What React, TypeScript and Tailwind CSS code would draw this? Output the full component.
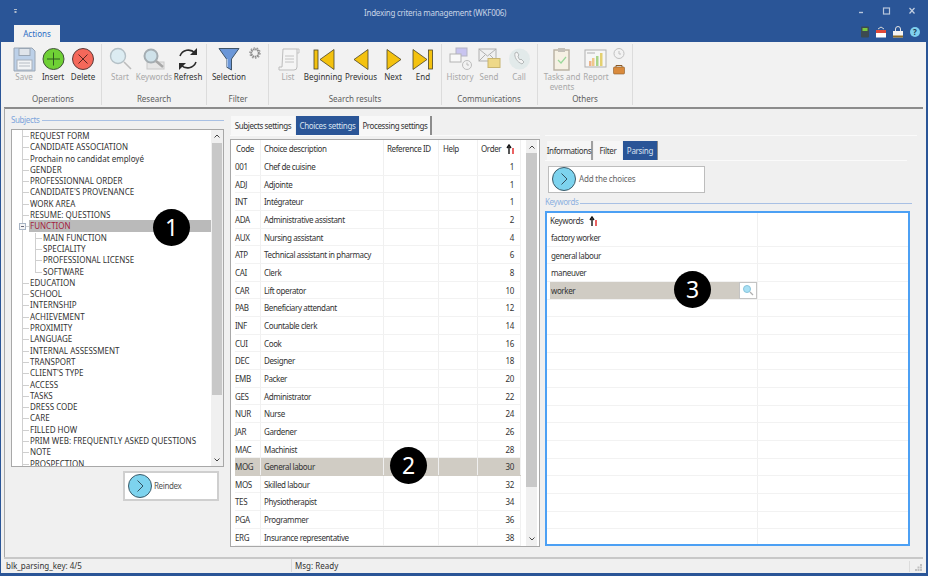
import React from "react";

const subjects: [string, number?][] = [
  ["REQUEST FORM"], ["CANDIDATE ASSOCIATION"], ["Prochain no candidat employé"], ["GENDER"],
  ["PROFESSIONNAL ORDER"], ["CANDIDATE'S PROVENANCE"], ["WORK AREA"], ["RESUME: QUESTIONS"],
  ["FUNCTION"], ["MAIN FUNCTION", 1], ["SPECIALITY", 1], ["PROFESSIONAL LICENSE", 1], ["SOFTWARE", 1],
  ["EDUCATION"], ["SCHOOL"], ["INTERNSHIP"], ["ACHIEVEMENT"], ["PROXIMITY"], ["LANGUAGE"],
  ["INTERNAL ASSESSMENT"], ["TRANSPORT"], ["CLIENT'S TYPE"], ["ACCESS"], ["TASKS"], ["DRESS CODE"],
  ["CARE"], ["FILLED HOW"], ["PRIM WEB: FREQUENTLY ASKED QUESTIONS"], ["NOTE"], ["PROSPECTION"],
];

const choices: [string, string, number][] = [
  ["001", "Chef de cuisine", 1], ["ADJ", "Adjointe", 1], ["INT", "Intégrateur", 1],
  ["ADA", "Administrative assistant", 2], ["AUX", "Nursing assistant", 4],
  ["ATP", "Technical assistant in pharmacy", 6], ["CAI", "Clerk", 8], ["CAR", "Lift operator", 10],
  ["PAB", "Beneficiary attendant", 12], ["INF", "Countable clerk", 14], ["CUI", "Cook", 16],
  ["DEC", "Designer", 18], ["EMB", "Packer", 20], ["GES", "Administrator", 22], ["NUR", "Nurse", 24],
  ["JAR", "Gardener", 26], ["MAC", "Machinist", 28], ["MOG", "General labour", 30],
  ["MOS", "Skilled labour", 32], ["TES", "Physiotherapist", 34], ["PGA", "Programmer", 36],
  ["ERG", "Insurance representative", 38],
];

const keywords = ["factory worker", "general labour", "maneuver", "worker", "", "", "", "", "", "", "", "", "", "", "", "", "", "", ""];

const SortIcon = () => (
  <svg width="9" height="10" viewBox="0 0 9 10" className="shrink-0">
    <path d="M3 10V3M1 4l2-3 2 3" fill="none" stroke="#111" strokeWidth="1.4" />
    <path d="M7 4v6" stroke="#e02020" strokeWidth="1.4" />
  </svg>
);

const Arrow = ({ className }: { className: string }) => (
  <div className={`absolute flex h-[24px] w-[24px] items-center justify-center rounded-full border border-[#3c5a68] bg-[#7dd3ee] ${className}`}>
    <svg width="10" height="14" viewBox="0 0 10 14"><path d="M2.5 1.5 8 7l-5.5 5.5" fill="none" stroke="#33505e" strokeWidth="1" /></svg>
  </div>
);

const Badge = ({ n, className }: { n: number; className: string }) => (
  <div className={`absolute flex h-[37px] w-[37px] items-center justify-center rounded-full bg-black text-[23px] text-white ${className}`}>{n}</div>
);

const RibbonLabel = ({ x, text, off }: { x: number; text: React.ReactNode; off?: boolean }) => (
  <div
    className={`absolute top-[72px] w-[70px] text-center text-[8px] leading-[10px] ${off ? "text-[#a8a8a8]" : "text-[#333]"}`}
    style={{ left: x - 35 }}
  >
    {text}
  </div>
);

const GroupLabel = ({ x, text }: { x: number; text: string }) => (
  <div className="absolute top-[94px] w-[90px] text-center text-[8px] leading-[10px] text-[#5e5e5e]" style={{ left: x - 45 }}>
    {text}
  </div>
);

const RibbonIcons = () => (
  <svg className="absolute left-0 top-0" width="928" height="110" viewBox="0 0 928 110">
    {/* save */}
    <path d="M14 48h18l3 3v20H14z" fill="#bcd0e8" stroke="#9aa6b4" />
    <rect x="19" y="48.5" width="11" height="7" fill="#dfe4ea" stroke="#9aa6b4" />
    <rect x="17" y="60" width="15" height="10" fill="#f2f4f6" stroke="#a8b0ba" />
    <path d="M19 63h11M19 66h11" stroke="#b6bcc4" />
    {/* insert */}
    <circle cx="53.5" cy="59" r="10.5" fill="#6fd035" stroke="#40503a" />
    <path d="M53.5 52.5v13M47 59h13" stroke="#2f5a20" strokeWidth="1" />
    {/* delete */}
    <circle cx="83" cy="59" r="10.5" fill="#f5685a" stroke="#5a3a38" />
    <path d="m78.5 54.5 9 9m0-9-9 9" stroke="#5a2620" strokeWidth="1" />
    {/* start */}
    <circle cx="118" cy="56" r="7.5" fill="#dcecf2" stroke="#b4c0c6" strokeWidth="1.4" />
    <path d="m124 62 7 7" stroke="#bcbcbc" strokeWidth="1.6" />
    {/* keywords */}
    <rect x="147" y="62" width="17" height="7" fill="#e6e6e6" stroke="#c8c8c8" />
    <circle cx="151" cy="56" r="6.5" fill="#cfe2ea" stroke="#a4adb2" strokeWidth="2" />
    <path d="m156 61 7 6" stroke="#a8a8a8" strokeWidth="2.4" />
    {/* refresh */}
    <path d="M180 56a9 9 0 0 1 15-3" fill="none" stroke="#2b2b2b" strokeWidth="1.6" />
    <path d="M197 48v7h-7z" fill="#2b2b2b" />
    <path d="M196 62a9 9 0 0 1-15 3" fill="none" stroke="#2b2b2b" strokeWidth="1.6" />
    <path d="M179 70v-7h7z" fill="#2b2b2b" />
    {/* selection funnel */}
    <path d="M219 48.5h20l-7.5 10.5v11l-5-3v-8z" fill="#6b97d8" stroke="#3f5468" />
    <path d="M227 59v8" stroke="#e8eef6" strokeWidth="1" />
    {/* gear */}
    <circle cx="255" cy="53" r="3.8" fill="none" stroke="#8c8c8c" strokeWidth="2" strokeDasharray="1.6 0.6" />
    <circle cx="255" cy="53" r="5.2" fill="none" stroke="#9a9a9a" strokeWidth="1.2" strokeDasharray="1.6 1.6" />
    {/* list */}
    <path d="M283 49h14v18a3 3 0 0 1-3 3h-15v-3h3z" fill="#f5f5f5" stroke="#bdbdbd" />
    <path d="M297 49h2v4h-2M285 56h9M285 59h9M285 62h9" fill="none" stroke="#c4c4c4" />
    {/* beginning */}
    <rect x="314" y="50" width="4" height="19" fill="#f4c20f" stroke="#4a4426" strokeWidth=".8" />
    <path d="m320 59.5 14-10v20z" fill="#f4c20f" stroke="#4a4426" strokeWidth=".8" />
    {/* previous */}
    <path d="m354 59.5 14-10v20z" fill="#f4c20f" stroke="#4a4426" strokeWidth=".8" />
    {/* next */}
    <path d="M401 59.5 387 49.5v20z" fill="#f4c20f" stroke="#4a4426" strokeWidth=".8" />
    {/* end */}
    <path d="M427 59.5 413 49.5v20z" fill="#f4c20f" stroke="#4a4426" strokeWidth=".8" />
    <rect x="428.5" y="50" width="4" height="19" fill="#f4c20f" stroke="#4a4426" strokeWidth=".8" />
    {/* history */}
    <rect x="456" y="48" width="11" height="8" fill="#c8c4f0" stroke="#b4b4c4" />
    <rect x="450" y="54" width="11" height="8" fill="#f8f8f8" stroke="#b4b4b4" />
    <circle cx="467" cy="65" r="4.5" fill="#f2f2f2" stroke="#bcbcbc" />
    <path d="M467 62.5V65h2" fill="none" stroke="#bcbcbc" />
    {/* send */}
    <rect x="479" y="49" width="17" height="12" fill="#f0f0f0" stroke="#b0b0b0" />
    <path d="m479 49 8.5 7 8.5-7M479 61l6-6m11 6-6-6" fill="none" stroke="#b0b0b0" />
    <rect x="488" y="58.5" width="12" height="9" fill="#eed888" stroke="#c8b470" />
    {/* call */}
    <circle cx="519.5" cy="59" r="10.5" fill="#e2eaea" />
    <path d="M515 53c-1 4 2 9 7 11l2-2-3-3-1 1c-1-1-2-3-2-4l1-1-2-3z" fill="#f4f4f4" stroke="#b4b8b8" />
    {/* tasks */}
    <rect x="554" y="50" width="15" height="20" fill="#f6f1e4" stroke="#b8b0a0" strokeWidth="1.4" />
    <rect x="558" y="48" width="7" height="4" fill="#c4c0b8" />
    <path d="m558 60 3 3 5-6" fill="none" stroke="#9ad89a" strokeWidth="1.2" />
    {/* report */}
    <rect x="585" y="50" width="21" height="17" fill="#f6f6f6" stroke="#b0b0b0" />
    <path d="M587 53h8" stroke="#b0b0b0" />
    <rect x="589" y="61" width="2.5" height="5" fill="#eeb48a" />
    <rect x="592" y="58" width="2.5" height="8" fill="#eec88a" />
    <rect x="596" y="56" width="2.5" height="10" fill="#a8d48a" />
    <rect x="600" y="53" width="2.5" height="13" fill="#e4d070" />
    {/* clock + box */}
    <circle cx="619" cy="53.5" r="5" fill="#f2f2f2" stroke="#c0c0c0" />
    <path d="M619 51v3h2" fill="none" stroke="#c0c0c0" />
    <rect x="613.5" y="67" width="11" height="7" rx="1" fill="#d98a3c" stroke="#8a5a28" strokeWidth=".6" />
    <path d="M616 67v-1.5h6V67" fill="none" stroke="#8a5a28" />
    {/* window controls */}
    <path d="M859 12.5h4" stroke="#b8c6dc" strokeWidth="1.4" />
    <rect x="883.5" y="8" width="6" height="6" fill="none" stroke="#b8c6dc" strokeWidth="1.2" />
    <path d="m909.5 8 5 5.5m0-5.5-5 5.5" stroke="#c4d0e2" strokeWidth="1.2" />
    <rect x="14" y="9" width="3" height="1" fill="#b0bccc" />
    <rect x="14.5" y="11" width="2" height="2" fill="#b0bccc" />
    {/* top right tools */}
    <rect x="861" y="26.5" width="8" height="11" rx="1" fill="#3c4a50" />
    <rect x="862.5" y="28" width="5" height="3" fill="#7cc840" />
    <rect x="876" y="30" width="10" height="7.5" fill="#fff" />
    <path d="M876 30h10v3h-10z" fill="#e04a3a" />
    <path d="M878 29l3-2 3 2" fill="none" stroke="#d8d8d8" />
    <rect x="893" y="31" width="10" height="6.5" fill="#f4f4f4" />
    <rect x="893" y="35.5" width="10" height="2" fill="#8a6a28" />
    <path d="M895.5 31v-2a2.5 2.5 0 0 1 5 0v2" fill="none" stroke="#e4e4e4" />
    <circle cx="915" cy="32" r="5" fill="#7fd0ee" />
  </svg>
);

const App: React.FC = () => {
  return (
    <div className="relative h-[576px] w-[928px] overflow-hidden whitespace-nowrap bg-[#f0f0f0] font-['Liberation_Sans',sans-serif] text-[8px] text-[#333]">
      {/* title bar */}
      <div className="absolute inset-x-0 top-0 h-[42px] bg-[#2a5597]" />
      <div className="absolute left-[364px] top-[8px] text-[8px] leading-[10px] tracking-[-0.25px] text-[#c8d4e6]">Indexing criteria management (WKF006)</div>
      <div className="absolute left-[14px] top-[25px] flex h-[18px] w-[46px] items-center justify-center bg-[#f2f2f2] text-[8px] text-[#2a6cc4]">Actions</div>
      <div className="absolute left-[1px] right-[2px] top-[42px] h-[65px] bg-[#f2f2f2]" />
      <div className="absolute left-[4px] right-[5px] top-[107px] h-[2px] bg-[#8c8c8c]" />
      <div className="absolute bottom-[18px] left-[4px] top-[108px] w-[1px] bg-[#a8a8a8]" />

      {[101, 206, 268, 441, 537, 632].map((x) => (
        <div key={x} className="absolute top-[44px] h-[61px] w-[1px] bg-[#dcdcdc]" style={{ left: x }} />
      ))}

      <RibbonIcons />
      <div className="absolute left-[912px] top-[27px] flex h-[10px] w-[6px] items-center justify-center text-[8px] font-bold text-[#1c3a50]">?</div>

      <RibbonLabel x={24} text="Save" off />
      <RibbonLabel x={53} text="Insert" />
      <RibbonLabel x={83} text="Delete" />
      <RibbonLabel x={120} text="Start" off />
      <RibbonLabel x={154} text="Keywords" off />
      <RibbonLabel x={188} text="Refresh" />
      <RibbonLabel x={229} text="Selection" />
      <RibbonLabel x={288} text="List" off />
      <RibbonLabel x={323} text="Beginning" />
      <RibbonLabel x={361} text="Previous" />
      <RibbonLabel x={393} text="Next" />
      <RibbonLabel x={423} text="End" />
      <RibbonLabel x={460} text="History" off />
      <RibbonLabel x={489} text="Send" off />
      <RibbonLabel x={519} text="Call" off />
      <RibbonLabel x={562} text={<>Tasks and<br />events</>} off />
      <RibbonLabel x={596} text="Report" off />

      <GroupLabel x={53} text="Operations" />
      <GroupLabel x={154} text="Research" />
      <GroupLabel x={238} text="Filter" />
      <GroupLabel x={355} text="Search results" />
      <GroupLabel x={489} text="Communications" />
      <GroupLabel x={585} text="Others" />

      {/* subjects tree */}
      <div className="absolute left-[11px] top-[115px] text-[8px] leading-[10px] tracking-[-0.38px] text-[#7da4dc]">Subjects</div>
      <div className="absolute left-[42px] top-[120px] h-[1px] w-[182px] bg-[#a8c0e4]" />
      <div className="absolute left-[11px] top-[129px] h-[338px] w-[213px] overflow-hidden border border-[#a8a8a8] bg-white">
        <div className="absolute bottom-0 left-[10px] top-0 w-[1px] bg-[#cfcfcf]" />
        <div className="absolute left-[23px] top-[103px] h-[39px] w-[1px] bg-[#cfcfcf]" />
        <div className="absolute left-0 right-[12px] top-0">
          {subjects.map(([name, level]) => (
            <div key={name} className="relative h-[11.3px] text-[8px] leading-[11.3px]">
              <div className={`absolute top-[6px] h-[1px] bg-[#cfcfcf] ${level ? "left-[23px] w-[7px]" : "left-[10px] w-[7px]"}`} />
              {name === "FUNCTION" && (
                <>
                  <div className="absolute inset-y-0 left-[17px] right-0 bg-[#bababa]" />
                  <div className="absolute left-[7px] top-[3px] flex h-[7px] w-[7px] items-center justify-center border border-[#a8b4c4] bg-[#f4f4f4]">
                    <div className="h-[1px] w-[3px] bg-[#667]" />
                  </div>
                </>
              )}
              <div className={`absolute whitespace-nowrap ${level ? "left-[31px]" : "left-[18px]"} ${name === "FUNCTION" ? "text-[#a4203c]" : "text-[#333]"}`}>
                {name}
              </div>
            </div>
          ))}
        </div>
        <div className="absolute bottom-0 right-0 top-0 w-[12px] bg-[#f0f0f0]">
          <div className="absolute inset-x-[1px] top-[13px] h-[252px] bg-[#c8c8c8]" />
          <svg className="absolute left-[3px] top-[4px]" width="6" height="4" viewBox="0 0 6 4"><path d="M.5 3.5 3 1l2.5 2.5" fill="none" stroke="#444" /></svg>
          <svg className="absolute bottom-[4px] left-[3px]" width="6" height="4" viewBox="0 0 6 4"><path d="M.5.5 3 3 5.5.5" fill="none" stroke="#444" /></svg>
        </div>
      </div>
      <Badge n={1} className="left-[153px] top-[209px]" />

      <div className="absolute left-[123px] top-[471px] h-[30px] w-[96px] border-2 border-[#cfcfcf] bg-white" />
      <Arrow className="left-[128px] top-[474px]" />
      <div className="absolute left-[154px] top-[481px] text-[8px] leading-[10px] tracking-[-0.38px] text-[#555]">Reindex</div>

      {/* middle tabs */}
      <div className="absolute left-[231px] top-[116px] flex h-[20px] w-[64px] items-center justify-center bg-[#f8f8f8] text-[8px] tracking-[-0.4px] text-[#333]">Subjects settings</div>
      <div className="absolute left-[296px] top-[116px] flex h-[20px] w-[63px] items-center justify-center bg-[#2a5597] text-[8px] tracking-[-0.3px] text-[#d8e2f0]">Choices settings</div>
      <div className="absolute left-[360px] top-[116px] flex h-[20px] w-[72px] items-center justify-center border-r-2 border-[#8c8c8c] bg-[#f8f8f8] text-[8px] tracking-[-0.4px] text-[#333]">Processing settings</div>
      <div className="absolute left-[230px] top-[135px] h-[1px] w-[310px] bg-[#fafafa]" />

      {/* choices grid */}
      <div className="absolute left-[230px] top-[139px] h-[408px] w-[310px] overflow-hidden border border-[#a8a8a8] bg-white">
        <div className="grid h-[18px] grid-cols-[30px_123px_55px_39px_43px] items-center text-[8px] tracking-[-0.38px] text-[#333]">
          <div className="h-full border-r border-[#f0f0f0] pl-[5px] leading-[18px]">Code</div>
          <div className="h-full border-r border-[#f0f0f0] pl-[3px] leading-[18px]">Choice description</div>
          <div className="h-full border-r border-[#f0f0f0] pl-[3px] leading-[18px]">Reference ID</div>
          <div className="h-full border-r border-[#f0f0f0] pl-[4px] leading-[18px]">Help</div>
          <div className="flex h-full items-center justify-between border-r border-[#f0f0f0] pl-[3px] pr-[5px]">Order <SortIcon /></div>
        </div>
        {choices.map(([code, label, order]) => {
          const on = code === "MOG";
          return (
            <div key={code} className={`ml-[4px] grid h-[17.67px] w-[286px] grid-cols-[26px_123px_55px_39px_43px] border-b text-[8px] leading-[17px] tracking-[-0.38px] ${on ? "border-[#d0ccc4] bg-[#d0ccc4]" : "border-[#f2f2f2]"}`}>
              <div className="-ml-[1px] border-r border-[#f0f0f0] pl-[1px]">{code}</div>
              <div className="border-r border-[#f0f0f0] pl-[3px]">{label}</div>
              <div className="border-r border-[#f0f0f0]" />
              <div className="border-r border-[#f0f0f0]" />
              <div className="border-r border-[#f0f0f0] pr-[6px] text-right">{order}</div>
            </div>
          );
        })}
        <div className="absolute bottom-0 right-[2px] top-0 w-[11px] bg-[#f0f0f0]">
          <div className="absolute inset-x-0 top-[13px] h-[334px] bg-[#c8c8c8]" />
          <svg className="absolute left-[3px] top-[5px]" width="6" height="4" viewBox="0 0 6 4"><path d="M.5 3.5 3 1l2.5 2.5" fill="none" stroke="#444" /></svg>
          <svg className="absolute bottom-[5px] left-[3px]" width="6" height="4" viewBox="0 0 6 4"><path d="M.5.5 3 3 5.5.5" fill="none" stroke="#444" /></svg>
        </div>
      </div>
      <Badge n={2} className="left-[390px] top-[447px]" />

      {/* right panel */}
      <div className="absolute left-[545px] top-[135px] h-[1px] w-[372px] bg-[#fafafa]" />
      <div className="absolute left-[547px] top-[141px] flex h-[19px] w-[46px] items-center justify-center border-r-2 border-[#a0a0a0] bg-[#f6f6f6] text-[8px] tracking-[-0.38px] text-[#333]">Informations</div>
      <div className="absolute left-[594px] top-[141px] flex h-[19px] w-[28px] items-center justify-center bg-[#f6f6f6] text-[8px] tracking-[-0.3px] text-[#333]">Filter</div>
      <div className="absolute left-[623px] top-[141px] flex h-[19px] w-[35px] items-center justify-center border-r border-[#8c8c8c] bg-[#2a5597] text-[8px] tracking-[-0.3px] text-[#d8e2f0]">Parsing</div>
      <div className="absolute left-[545px] top-[160px] h-[1px] w-[362px] bg-[#fafafa]" />
      <div className="absolute left-[548px] top-[166px] h-[27px] w-[157px] border border-[#bdbdbd] bg-white" />
      <Arrow className="left-[552px] top-[167px]" />
      <div className="absolute left-[579px] top-[174px] text-[8px] leading-[10px] tracking-[-0.2px] text-[#666]">Add the choices</div>

      <div className="absolute left-[545px] top-[197px] text-[8px] leading-[10px] tracking-[-0.38px] text-[#8db0e0]">Keywords</div>
      <div className="absolute left-[580px] top-[203px] h-[1px] w-[332px] bg-[#a8c0e4]" />
      <div className="absolute left-[545px] top-[211px] h-[335px] w-[365px] overflow-hidden border-2 border-[#4ca0f4] bg-white">
        <div className="grid h-[16px] grid-cols-[211px_1fr] text-[8px] leading-[15px] tracking-[-0.38px]">
          <div className="flex items-center gap-[6px] border-r border-[#f0f0f0] pb-[2px] pl-[3px]">Keywords <SortIcon /></div>
          <div />
        </div>
        {keywords.map((word, i) => (
          <div key={i} className="grid h-[17.67px] grid-cols-[211px_1fr] border-b border-[#f2f2f2] text-[8px] leading-[17px] tracking-[-0.38px]">
            <div className={`relative ml-[3px] border-r border-[#f0f0f0] pl-[1px] ${word === "worker" ? "bg-[#d0ccc4]" : ""}`}>
              {word}
              {word === "worker" && (
                <div className="absolute inset-y-0 right-0 flex w-[18px] items-center justify-center border border-[#c4c4c4] bg-white">
                  <svg width="12" height="12" viewBox="0 0 12 12">
                    <circle cx="5" cy="5" r="3.5" fill="#a8e0f4" stroke="#88c4dc" />
                    <path d="m8 8 3 3" stroke="#b0b0b0" strokeWidth="1.2" />
                  </svg>
                </div>
              )}
            </div>
            <div />
          </div>
        ))}
      </div>
      <Badge n={3} className="left-[674px] top-[271px]" />

      {/* status bar */}
      <div className="absolute left-[4px] right-[5px] top-[557px] h-[2px] bg-[#c8c8c8]" />
      <div className="absolute left-[6px] top-[561px] text-[8px] leading-[10px] text-[#333]">blk_parsing_key: 4/5</div>
      <div className="absolute left-[291px] top-[559px] h-[13px] w-[1px] bg-[#d8d8d8]" />
      <div className="absolute left-[295px] top-[561px] text-[8px] leading-[10px] text-[#333]">Msg: Ready</div>
      <div className="absolute left-[909px] top-[561px] h-[11px] w-[1px] bg-[#dcdcdc]" />
      <svg className="absolute left-[915px] top-[564px]" width="7" height="7" viewBox="0 0 7 7">
        <path d="M5 0h2v2H5zM2.5 2.5h2v2h-2zM5 2.5h2v2H5zM0 5h2v2H0zM2.5 5h2v2h-2zM5 5h2v2H5z" fill="#c0c0c0" />
      </svg>

      {/* window frame */}
      <div className="absolute bottom-0 left-0 top-0 w-[1px] bg-[#2a5597]" />
      <div className="absolute bottom-0 right-0 top-0 w-[2px] bg-[#2a5597]" />
      <div className="absolute inset-x-0 bottom-0 h-[3px] bg-[#2a5597]" />
    </div>
  );
};

export default App;
